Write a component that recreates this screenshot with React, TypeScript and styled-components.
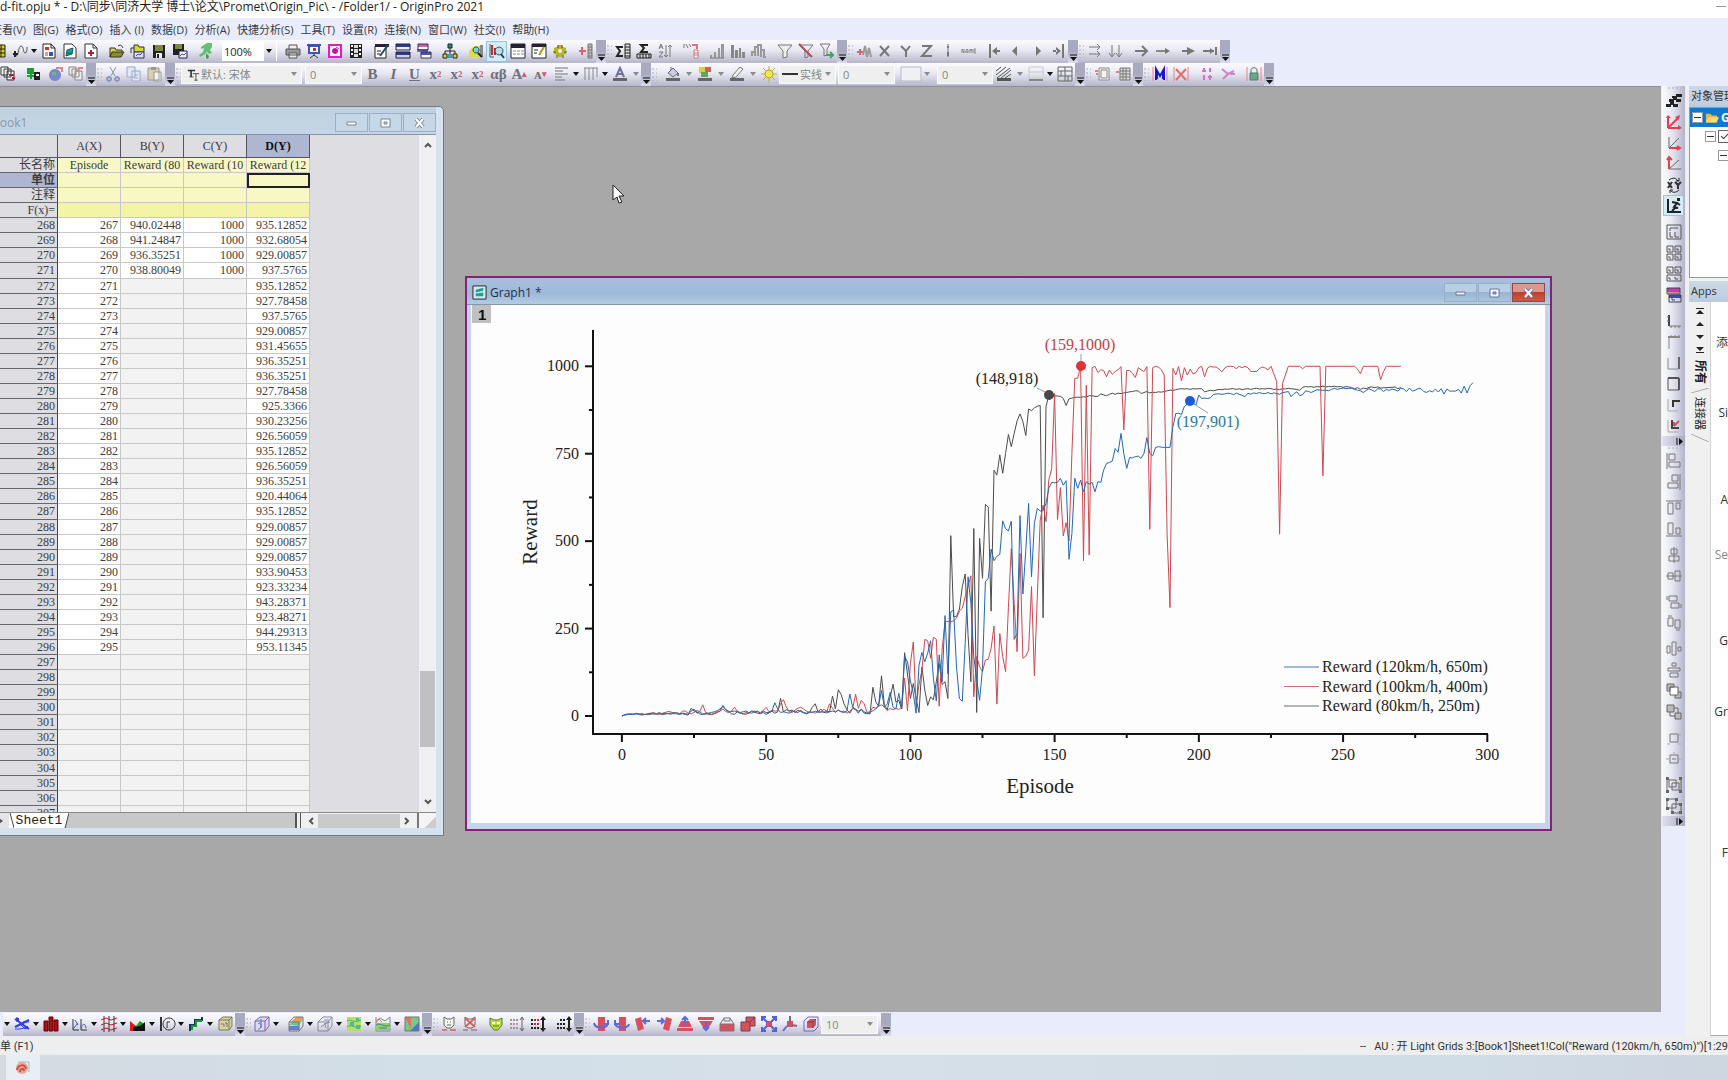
import React from 'react';
import styled, { createGlobalStyle, css } from 'styled-components';

const uiFont = '"Open Sans", "Noto Sans CJK SC", sans-serif';
const sheetFont = '"Liberation Serif", "Noto Sans CJK SC", serif';

const Global = createGlobalStyle`
  *, *::before, *::after { box-sizing: border-box; }
  body { margin: 0; font-family: ${uiFont}; font-size: 12px; color: #333; overflow: hidden; }
  button, select, input { font-family: inherit; }
`;

/* ---------- icon shapes: s = thin stroke, S = thick stroke, f = fill ---------- */

const shapes: Record<string, string> = {
  gridYellow: 'f#d8d020 M1 2h13v12H1z;s#222 M1 2h13v12H1zM1 6h13M1 10h13M5 2v12M10 2v12',
  curve: 's#555 M4 13c3 0 2-10 5-10s2 7 4 7 2-3 2-6;S#222 M1 11h5M3 8v6',
  report: 'f#fff M2 1h8l4 4v10H2z;s#222 M2 1h8l4 4v10H2zM10 1v4h4;f#c33 M4 4h4v3H4z;f#35a M8 9h4v4H8z;s#c33 M4 10h3M4 12h3',
  graphNew: 'f#fff M2 1h8l4 4v10H2z;s#333 M2 1h8l4 4v10H2z;f#1aa39a M5 7l6-2-1 6-6 2z;s#0c5c66 M5 7l6-2-1 6-6 2zM4 10h7',
  pageRed: 'f#fff M2 1h8l4 4v10H2z;s#333 M2 1h8l4 4v10H2zM10 1v4h4;S#b02038 M5 10h6M8 7v6',
  open: 'f#d8d43c M1 5h5l1 2h6v7H1z;f#8c8a20 M3 9h12l-3 5H1z;s#333 M1 14V5h5l1 2h6v2M3 9h12l-3 5H1z;s#333 M9 3c3-2 4 0 5 2',
  openAlt: 'f#d8d43c M4 2h4l1 2h5v5H4z;s#333 M4 2h4l1 2h5v5H4z;f#dde M4 9h10v6H4z;s#334 M4 9h10v6H4z;s#35a M6 13l2-2 2 1 2-2;s#333 M1 10V5h3',
  save: 'f#222 M2 2h12v13H2z;f#7a8a40 M4 2h8v6H4z;f#eee M5 10h6v5H5z;f#222 M6 11h2v4H6z',
  saveAll: 'f#222 M1 1h11v11H1z;f#7a8a40 M3 1h7v5H3z;f#eef M7 8h8v7H7z;s#224 M7 8h8v7H7z;s#35a M8 13l2-2 2 1 2-2',
  runner: 'f#63c070 M9 0h5v4l-2 3 2 3-3 1-2-2-3 3-4 2-1-2 4-3 1-4-3 1V4z;f#3d9a58 M8 10l3 3-1 3-2-1z',
  printer: 'f#999 M1 6h14v6H1z;f#eee M4 2h8v4H4zM4 10h8v5H4z;s#555 M4 6V2h8v4M1 6h14v6H1zM4 10h8v5H4z',
  present: 'f#3858b0 M1 1h14v2H1zM2 3h12v8H2z;f#fff M4 4h8v5H4z;s#333 M8 11v2M4 15l4-3 4 3;f#c33 M7 5h3v3H7z',
  pinkBox: 'f#e818c8 M1 1h14v14H1z;f#fff M3 3h10v10H3z;f#c010a8 M8 5a3 3 0 1 0 .1 0z;s#e818c8 M9 4l3 2',
  film: 'f#222 M2 1h12v14H2z;f#ddd M6 2h4v3H6zM6 6h4v4H6zM6 11h4v3H6z;f#fff M3 2h2v2H3zM3 6h2v2H3zM3 10h2v2H3zM11 2h2v2h-2zM11 6h2v2h-2zM11 10h2v2h-2z',
  edit: 'f#fff M1 3h11v12H1z;f#224 M1 1h14v3H1z;s#222 M1 3h11v12H1z;S#2a4a5a M14 2L6 13;s#222 M3 8h4M3 11h3',
  panes: 'f#2a3a90 M1 1h14v3H1zM1 9h14v3H1z;s#224 M1 1h14v6H1zM1 9h14v6H1z',
  cascade: 'f#fff M2 1h10v7H2zM5 8h10v7H5z;f#d060a8 M2 1h10v3H2z;f#7b68c8 M1 6h11v3H1z;f#4858b0 M5 9h10v3H5z;s#335 M5 9h10v6H5zM2 1h10v6H2z',
  tree: 'f#2a8a8a M6 1h4v4H6z;f#e0d040 M1 11h4v4H1zM11 11h4v4h-4z;f#3aa0b0 M6 11h4v4H6z;s#222 M8 5v6M3 11V8h10v3M6 1h4v4H6zM1 11h4v4H1zM11 11h4v4h-4z',
  findYellow: 'f#e0dc40 M1 8l5-5h9v11H1z;f#888 M12 2h3v12h-3z;f#7ad0d8 M8 4a3 3 0 1 0 .1 0z;s#246 M8 4a3 3 0 1 0 .1 0z;S#222 M10 10l4 4',
  findPlot: 'S#b33 M3 2v10;S#933 M6 5v7;s#555 M1 1v13h4;f#b8dcec M10 4a4 4 0 1 0 .1 0z;s#357 M10 4a4 4 0 1 0 .1 0z;S#244 M12 11l3 4',
  sheet: 'f#fff M1 1h14v14H1z;f#223 M1 1h14v4H1z;s#223 M1 1h14v14H1z;s#888 M3 8h3M7 8h3M11 8h3M3 11h3M7 11h3M11 11h3',
  sheetEdit: 'f#fff M1 1h14v14H1z;f#223 M1 1h14v3H1z;s#223 M1 1h14v14H1z;S#a8a020 M13 4l-5 8;s#223 M3 7h4M3 10h3',
  gear: 'f#b8b428 M6 2h4l1 2 3 1v6l-3 1-1 2H6l-1-2-3-1V5l3-1z;s#554 M1 9h3M12 9h3M6 2v3M10 2v3M5 12v3M11 12v3;f#eee M8 6a2 2 0 1 0 .1 0z',
  addCol: 'S#e06070 M1 8h7M4 4v8;f#bbb M10 1h4v14h-4z;s#777 M10 1h4v14h-4zM10 4h4M10 7h4M10 10h4M10 13h4',
  sumCol: 'S#222 M8 4H2l3 4-3 5h6;f#ddd M10 1h5v14h-5z;s#222 M10 1h5v14h-5zM10 4h5M10 7h5M10 10h5M10 13h5',
  sumRow: 'S#222 M12 2H5l3 3-3 4h7;s#222 M1 11h14v4H1zM4 11v4M7 11v4M10 11v4M13 11v4',
  sortAZ: 's#777 M2 6l2-5 2 5M2 4h4M2 9h4l-4 5h4M9 2v12M7 12l2 2 2-2M13 14V2M11 4l2-2 2 2',
  yRed: 's#777 M1 1v4M3 1l2 4M6 1l2 3;f#fff M11 7h4v8h-4z;s#c77 M11 7h4v8h-4zM11 10h4M11 12h4;S#e07080 M9 2h5v4',
  bars1: 'f#999 M1 12h2v3H1zM5 9h2v6H5zM9 5h2v10H9zM12 1h3v14h-3z;s#777 M1 15h14',
  bars2: 'f#888 M1 2h3v13H1zM5 7h3v8H5zM9 5h2v10H9zM12 9h3v6h-3z',
  bars3: 'S#999 M1 13v-4h3v4M4 9V4h3v9M7 8V2h3v12M10 7h3v7h2',
  funnel: 'f#eee M1 2h14l-5 6v6l-4 1V8z;s#777 M1 2h14l-5 6v6l-4 1V8z',
  funnelX: 's#777 M2 2h13l-5 6v6l-3 1V8z;S#b84858 M1 1l13 13',
  funnelGo: 's#777 M1 1h10L8 6v6l-3 1V6z;S#48a068 M7 12h7M11 9l3 3-3 3',
  plusWave: 'S#e06070 M1 9h6M4 6v6;S#999 M7 12l2-9 2 11 2-9 2 9',
  xTxt: 'S#777 M3 3l9 10M12 3L3 13',
  yTxt: 'S#777 M3 3l5 5 4-5M8 8v6',
  zTxt: 'S#777 M3 3h9L3 13h10',
  dotV: 's#777 M8 1v13;S#777 M8 3v2M8 9v3M7 12h2',
  nameTag: 's#888 M1 10V6l2 4V6M5 10V7l1-1 1 1v3M5 9h2M9 10V6l1 2 1-2v4M15 6h-2v4h2M13 8h2',
  toStart: 'S#777 M3 1v14;f#777 M5 8l5-4v8zM9 7h4v2H9z',
  left: 'f#777 M4 8l5-5v10z',
  right: 'f#777 M12 8L7 3v10z',
  toEnd: 'S#777 M13 1v14;f#777 M11 8L6 4v8zM3 7h4v2H3z',
  rights: 's#777 M2 4h11M10 1l3 3-3 3M2 11h11M10 8l3 3-3 3',
  downs: 's#777 M4 2v11M1 10l3 4 3-4M11 2v11M8 10l3 4 3-4',
  arrowBig: 'S#777 M1 8h12M8 3l5 5-5 5',
  arrowSm: 'S#888 M1 8h11;f#777 M10 5l5 3-5 3z',
  arrowFill: 'S#777 M1 8h8;f#777 M6 4l8 4-8 4z',
  arrowEnd: 'S#777 M1 8h11M14 4v8;f#777 M8 5l4 3-4 3z',
  stack: 'f#fff M1 1h7v8H1zM4 3h7v8H4zM7 5h7v8H7z;s#333 M1 1h7v8H1zM4 3h7v8H4zM7 5h7v9H7z;S#b02038 M9 9h5M12 12h3',
  greenIn: 'f#18a030 M1 2h7v6H1z;f#222 M8 6h6v8H8z;S#18a030 M1 10h7M5 7v6;f#fff M10 8h3v2h-3z',
  globe: 'f#7888c8 M8 3a6 6 0 1 0 .1 0z;f#70b888 M5 6h4v3H5z;S#e08888 M9 2h6v4',
  copies: 'f#eee M1 1h7v8H1zM4 3h7v8H4zM7 5h7v9H7z;s#888 M1 1h7v8H1zM4 3h7v8H4zM7 5h7v9H7z;S#e08888 M10 2h5M9 5h3',
  cut: 's#8898b8 M5 1l5 9M11 1L6 10;S#8898b8 M4 11a2 2 0 1 0 .1 0zM12 11a2 2 0 1 0 .1 0z',
  copy: 'f#e4e8f4 M1 1h8v10H1zM6 5h8v10H6z;s#98a8c8 M1 1h8v10H1zM6 5h8v10H6zM8 9h4M8 12h4',
  paste: 'f#d8d0a8 M1 2h11v12H1z;f#999 M4 1h5v3H4z;f#f4f4f4 M7 6h7v9H7z;s#999 M1 2h11v12H1zM7 6h7v9H7z',
  alignL: 's#777 M1 2h13M1 5h8M1 8h13M1 11h7M1 14h10',
  vlines: 's#888 M2 2v12M6 2v12M10 2v12M14 2v9M1 2h14',
  fontColor: 'S#7070a0 M4 11l4-9 4 9M6 8h5;f#666 M1 12h14v3H1z',
  bucket: 'f#ccd M3 7l5-5 5 5-5 4z;s#667 M3 7l5-5 5 5-5 4zM6 4V1;S#778 M13 7v3;f#666 M1 12h14v3H1z',
  palette: 'f#d8d040 M2 1h6v6H2z;f#d06060 M8 1h6v5H8z;f#60a860 M4 6h7v5H4z;f#666 M1 12h14v3H1z',
  pen: 'f#eee M4 9l7-8 3 2-7 8-4 1z;s#777 M4 9l7-8 3 2-7 8-4 1z;f#666 M1 12h14v3H1z',
  sun: 's#c0b020 M8 0v16M0 8h16M2 2l12 12M14 2L2 14;f#f0e850 M8 3.500a4.500 4.500 0 1 0 .1 0z;s#a8a040 M8 4a4 4 0 1 0 .1 0z',
  swatch: 'f#eef0f6 M-2 1h20v14H-2z;s#bbb M-2 1h20v14H-2z',
  hatch: 's#555 M0 5l5-4M0 9l10-8M1 12L14 2M5 12l10-8M9 12l6-4;f#555 M1 12h14v3H1z',
  border: 's#ccc M1 1h14v11H1zM1 6h14;f#888 M1 13h14v2H1z',
  cells: 's#666 M1 1h14v14H1zM1 5h14M1 10h14M8 1v14M4 5v5M11 10v5',
  frameIn: 'f#f4f4f4 M5 2h10v12H5z;s#888 M5 2h10v12H5zM7 4h6v8H7z;S#e08080 M1 5h3M2 8h2',
  gridIn: 'f#ddd M5 2h10v12H5z;s#777 M5 2h10v12H5zM5 5h10M5 8h10M5 11h10M8 2v12M11 2v12;S#e08080 M1 6h4',
  mMark: 's#f08090 M1 1v14M15 1v14;S#1818c8 M4 14V3l4 7 4-7v11M5 5v8M11 5v8',
  xMark: 's#f08080 M1 1v14M15 1v14;S#e07070 M3 3l10 11M13 3L3 14',
  pinkDots: 'S#d870d0 M5 2v4M5 9v5M11 2v4M11 9v5M3 5h4M9 11h4',
  pinkCut: 'S#c888c8 M2 3l6 5-5 5M8 8l6-3M10 8h5',
  lock: 's#f08080 M1 1v14M15 1v14;f#68a888 M4 7h8v7H4z;s#587868 M5 7V4c0-3 6-3 6 0v3M4 7h8v7H4z',
  scatter: 'S#3040e0 M1 3l14 10M1 11l6-3 8-4;s#3040e0 M1 13h5l8-2M3 1v5M9 6h6M6 8l5 5;f#3040e0 M2 2h3v3H2zM11 10h3v3h-3z',
  redBars: 'f#a81018 M1 5h4v10H1zM6 1h4v14H6zM11 4h4v11h-4z;s#600 M1 5h4v10H1zM6 1h4v14H6zM11 4h4v11h-4z',
  multi: 's#333 M1 3v11h6M9 3v11h6;s#4050c0 M1 13l5-6M9 12c2-5 4-5 5 0M3 4l3 5',
  redGrid: 's#333 M3 0v16M8 0v16M13 0v16;s#c01828 M0 4l5-2 5 2 6-2M0 9l5-2 5 2 6-2M0 14l5-2 5 2 6-2',
  area: 'f#e01818 M0 5l7 6v4H0z;f#18a018 M6 10l4-5 5 4v3H8z;f#111 M3 11l7-1 5-4v9H3z',
  polar: 'S#333 M2 1v14;s#333 M10 2a6 6 0 1 0 .1 0zM8 12V6h3',
  steps: 'S#123a58 M2 15V9h5V4h7V1;S#189838 M4 14V10h4V5h6',
  template: 'f#d8d4a0 M2 4l4-3h9v9l-3 4H2z;s#776 M2 4h10v10H2zM2 4l4-3h9v9l-3 4M12 4l3-3M4 8h3v3M8 7h2v4',
  cube: 'f#dcd8f0 M1 5l5-4h9v9l-4 5H1z;s#776898 M1 5h10v10H1zM1 5l5-4h9v9l-4 5M11 5l4-4;s#5870c0 M4 8c4-4 4 6 0 5M7 3v9',
  surface: 'f#70c888 M1 9l5-6h9l-4 7z;f#e8a050 M4 5l4-4h7l-3 5z;f#6080d8 M1 10h10v4H1z;s#777 M1 6h10v9H1zM1 6l5-5h9v9l-4 5',
  wire: 's#8888a0 M1 6h10v9H1zM1 6l5-5h9v9l-4 5M11 6l4-5M4 11l4-3 1 4M7 4h5M7 8l6-2',
  contour: 'f#b8e068 M1 1h14v14H1z;s#48a878 M1 5c4-3 5 3 14-1M1 11c5-4 8 3 14-1;f#50b8a0 M4 6h4v4H4zM10 9h4v4h-4zM10 2h3v3h-3z',
  contourEdge: 's#888 M1 1v14h14V1M1 5l4-3 5 3 5-4;f#90d068 M1 7h14v7H1z;s#3888a0 M1 9c4-3 8 3 14 0M4 12h8;s#d08060 M1 7l3-4 3 3',
  rgbMap: 'f#78c888 M1 1h14v14H1z;f#e07060 M1 1h6v12z;f#4878d0 M15 15V6L6 15z;s#776 M1 1h14v14H1z',
  maskW: 'f#f4f4f4 M3 1l3 2h4l3-2v8l-3 3H6L3 9z;s#666 M3 1l3 2h4l3-2v8l-3 3H6L3 9zM6 6h1M9 6h1M6 9h4;S#d87878 M1 14h5M9 14h6',
  maskX: 's#666 M3 1l3 2h4l3-2v8l-3 3H6L3 9zM1 14h5M9 14h6;S#d86060 M3 2l10 9M13 2L3 11',
  maskG: 'f#c8d838 M2 2l4 2h4l4-2v7l-4 5H6L2 9z;s#48803c M2 2l4 2h4l4-2v7l-4 5H6L2 9zM5 10h6;f#fff M4 6h3v2H4zM9 6h3v2H9z',
  dotsGray: 'S#999 M1 4h2M4 4h2M7 4h2M1 12h2M4 12h2M7 12h2M1 8h2;S#d09090 M4 8h2M7 8h2;s#666 M13 1v14M11 4l2-3 2 3M11 12l2 3 2-3',
  dotsRed: 'S#222 M1 4h2M1 8h2M1 12h2M4 12h2M7 12h2;S#d02828 M4 4h2M7 4h2M4 8h2M7 8h2;S#222 M13 3v10;f#222 M10 4l3-4 3 4zM10 12l3 4 3-4z',
  dotsBlack: 'S#222 M1 8h2M4 8h2M7 8h2M1 12h2M4 12h2M7 12h2M4 4h2M7 4h2M13 3v10;f#222 M10 4l3-4 3 4zM10 12l3 4 3-4z',
  rotL: 'f#d85060 M5 1h7v14H5z;S#6068d8 M1 7c1 6 13 6 14 0M15 4v4h-4',
  rotR: 'f#d85060 M5 1h7v14H5z;S#6068d8 M15 8c-1 5-13 5-14-1M1 4v4h5',
  tiltL: 'f#d85060 M0 3l6-2 3 12-6 2z;S#6068e0 M8 5h7M11 2L8 5l3 3',
  tiltR: 'f#d85060 M16 3l-6-2-3 12 6 2z;S#6068e0 M1 5h7M5 2l3 3-3 3',
  trapUp: 'f#d85060 M4 5h8l3 6H1zM0 12h16v3H0z;S#6068e0 M8 9V1M5 4l3-3 3 3',
  trapDown: 'f#d85060 M0 1h16v3H0zM1 5h14l-4 6H5z;S#6068e0 M8 6v8M5 11l3 3 3-3',
  persp: 'f#d85060 M1 8h14v7H1z;s#777 M1 8l4-6h6l4 6M5 2v3h6V2M1 8h14v7H1z',
  cubeRed: 'f#d85060 M1 6h9v9H1zM6 1h9v9h-5V6H6z;s#704050 M1 6h9v9H1zM6 6V1h9v9h-5M10 6l5-5',
  expand: 'f#c85068 M5 5h6v6H5z;S#5060e0 M1 5V1h4M11 1h4v4M15 11v4h-4M5 15H1v-4M2 2l4 4M14 2l-4 4M2 14l4-4M14 14l-4-4',
  shrink: 'f#d85060 M5 5h6v6H5z;S#886088 M8 0v6M10 9l5 1;S#6068d0 M5 10l-4 5',
  cubeBlue: 's#6068e0 M1 5l4-4h10v10l-4 4H1z;f#d85060 M4 6l3-3h6v6l-3 3H4z;s#704050 M4 6h6v6M10 6l3-3',
  layers: 'f#222 M0 11h5v3H0zM4 9h4v3H4zM7 11h5v3H7zM3 6h5v3H3zM7 4h4v3H7zM10 6h5v3h-5zM6 3h4v2H6zM10 1h6v3h-6z',
  axesRed: 'S#e04050 M2 14h12M2 14V3M2 14L12 4;f#e04050 M0 4l2-3 3 3zM12 11l4 3-4 2zM9 3l5-2-1 5z',
  axesX: 's#666 M3 2v11L13 3;S#e04050 M3 13h11M11 11l3 2-3 2',
  axesY: 's#666 M3 13h12M3 13l10-9;S#e04050 M3 13V2M1 4l2-3 3 3',
  swapXY: 'S#333 M2 5l4 6M6 5l-4 6M9 5l3 3 3-3M12 8v4;s#222 M3 3c4-3 7-2 9 1M13 1v3h-3M13 13c-3 3-7 3-9 0M4 16v-3h3',
  runPlot: 'S#222 M2 1v13h13M6 4l5 1-3 4 4 1M10 9l-4 4M11 5l3 2;f#222 M11 0h3v3h-3z',
  panel1: 's#555 M1 1h14v14H1zM4 4h8M4 4v3M4 8v5h3M9 8v5h4',
  panel4: 's#555 M1 1h6v6H1zM9 1h6v6H9zM1 9h6v6H1zM9 9h6v6H9zM3 3v2h2M11 3v2h2M3 11v2h2M11 11v2h2',
  panel3: 's#555 M1 1h6v6H1zM9 1h6v6H9zM1 9h14v6H1zM3 3v2h2M11 3v2h2M3 11v2h2M9 11v2h3',
  panelColor: 'f#c838b8 M1 1h13v4H1z;f#3848d0 M3 8h12v3H3z;s#444 M1 1h13v6H1zM3 8h12v7H3zM6 11v2h3;s#c04050 M2 6h11',
  axLB: 'S#444 M3 2v11;s#777 M3 13h12M5 13v2M9 13v2M13 13v2M1 4h2M1 8h2',
  axT: 's#888 M3 3v12;S#888 M2 3h12;s#888 M5 1v2M9 1v2M13 1v2',
  axR: 's#888 M2 3v11h11;S#666 M13 2v12',
  axBox: 's#555 M2 2h11v12H2z;S#555 M2 2h11M13 2v12',
  axIn: 's#aaa M2 2v12h10;S#333 M7 9V4h7M7 4v6',
  axInRed: 's#aaa M2 2v12h10;S#444 M6 2v8h7;S#d05060 M8 8l5-5M8 4v4',
  al1: 's#777 M3 1h6v6H3zM3 9h11v5H3zM1 0v16',
  al2: 's#777 M6 1h6v6H6zM2 9h10v5H2zM14 0v16',
  al3: 's#777 M2 3h5v11H2zM10 3h4v6h-4zM0 1h16',
  al4: 's#777 M2 2h5v11H2zM10 7h4v6h-4zM0 15h16',
  al5: 's#777 M5 2h6v5H5zM3 9h10v5H3zM8 0v16',
  al6: 's#777 M2 5h5v6H2zM9 3h5v10H9zM0 8h16',
  al7: 's#777 M3 2h8v5H3zM5 9h8v5H5zM1 2v4M15 10v4',
  al8: 's#777 M2 3h5v8H2zM9 5h5v8H9zM2 1h4M10 15h4',
  al9: 's#777 M1 5h3v7H1zM6 1h4v13H6zM12 6h3v4h-3z',
  al10: 's#777 M6 1h4v3H6zM2 6h12v3H2zM4 11h8v4H4z',
  front: 'f#bbb M1 1h7v6H1zM9 9h6v6H9z;f#fff M4 4h8v8H4z;s#666 M1 1h7v3H4v4H1zM4 4h8v8H4zM12 9h3v6H9v-3',
  back: 'f#bbb M1 1h7v7H1zM9 9h6v6H9z;s#666 M1 1h7v7H1zM9 9h6v6H9zM8 4h4v5M4 8v4h5',
  sq1: 's#777 M4 4h8v8H4z;s#aaa M1 14h3M12 14h3M14 3v3',
  sq2: 's#777 M4 4h8v8H4zM6 8h4;s#aaa M0 8h3M13 8h3M8 1v2',
  grp1: 's#666 M1 3v10M15 3v10M3 3h7v7H3zM6 6h7v7H6z;f#666 M0 0h3v3H0zM13 0h3v3h-3zM0 13h3v3H0zM13 13h3v3h-3z',
  grp2: 's#666 M1 1h9v9H1zM6 6h9v9H6z;f#666 M0 0h3v3H0zM9 0h3v3H9zM0 9h3v3H0zM13 5h3v3h-3zM5 13h3v3H5zM13 13h3v3h-3z',
  graphIcon: 'f#d8e8ea M1 1h14v14H1z;s#222 M1 1h14v14H1z;f#1aa39a M4 5l8-2v3l-8 2zM4 9l8-1v4H4z',
  folder: 'f#e8b830 M1 3h5l2 2h6v8H1z;f#f8dc78 M4 7h12l-3 6H1z',
  tt: 'S#333 M1 3h9M5 3v8;s#333 M7 7h8M11 7v8M9 15h4M3 11h5',
};

const Glyph = ({ name, size = 16 }: { name: string; size?: number }) => (
  <svg width={size} height={size} viewBox="0 0 16 16" overflow="visible" aria-hidden="true">
    {shapes[name].split(';').map((part, i) => {
      const cut = part.indexOf(' ');
      const kind = part[0];
      const color = part.slice(1, cut);
      const d = part.slice(cut + 1);
      return kind === 'f'
        ? <path key={i} d={d} fill={color} />
        : <path key={i} d={d} fill="none" stroke={color} strokeWidth={kind === 'S' ? 2 : 1} />;
    })}
  </svg>
);

const Caret = ({ dark = true }: { dark?: boolean }) => (
  <svg width="6" height="4" viewBox="0 0 6 4" aria-hidden="true">
    <path d="M0 0h6L3 4z" fill={dark ? '#111' : '#8a8a92'} />
  </svg>
);

/* ---------- frame ---------- */

const Page = styled.div`
  display: flex;
  flex-direction: column;
  height: 100vh;
  overflow: hidden;
  background: #e9edfb;
`;

const TitleBar = styled.header`
  display: flex;
  justify-content: space-between;
  align-items: center;
  height: 18px;
  padding-bottom: 4px;
  background: #fff;
  color: #1c1c1c;
  font-size: 12px;
  line-height: 14px;
  white-space: nowrap;
`;

const MenuBar = styled.nav`
  display: flex;
  align-items: center;
  gap: 7px;
  height: 22px;
  margin-left: -9px;
  padding-top: 2px;
  font-size: 11px;
`;

const MenuItem = styled.button`
  flex: none;
  padding: 0;
  border: 0;
  background: none;
  color: #3a3a44;
  font-size: 11px;
  line-height: 18px;
  white-space: nowrap;
`;

const ToolRow = styled.div<{ $start: number }>`
  display: flex;
  flex: none;
  height: 23px;
  padding-left: ${p => Math.max(p.$start, 0)}px;
  margin-left: ${p => Math.min(p.$start, 0)}px;
`;

const ToolGroup = styled.div<{ $vertical?: boolean }>`
  display: flex;
  flex: none;
  align-items: center;
  ${p => p.$vertical ? css`
    flex-direction: column;
    width: 23px;
    background: linear-gradient(90deg, #fbfbfe, #e6e6f0 45%, #b4b4ca);
    border-radius: 0 0 3px 3px;
  ` : css`
    height: 23px;
    background: linear-gradient(#fbfbfe, #e8e8f2 45%, #b6b6ca);
    border-radius: 0 3px 3px 0;
    padding-bottom: 1px;
  `}
`;

const ToolButton = styled.button<{ $on?: boolean; $color?: string; $italic?: boolean }>`
  display: flex;
  flex: none;
  align-items: center;
  justify-content: center;
  width: 21px;
  height: 21px;
  padding: 0;
  border: 1px solid ${p => (p.$on ? '#8cc4ea' : 'transparent')};
  background: ${p => (p.$on ? '#d6ebf8' : 'none')};
  color: ${p => p.$color || '#70707c'};
  font: ${p => (p.$italic ? 'italic' : 'normal')} bold 15px/18px "Liberation Serif", serif;
  white-space: nowrap;
  sup, sub { font-size: 9px; line-height: 8px; color: #c86070; }
  u { text-decoration-thickness: 1px; }
`;

const DropButton = styled.button<{ $wide?: boolean }>`
  display: flex;
  flex: none;
  align-items: center;
  justify-content: center;
  width: ${p => (p.$wide ? 11 : 8)}px;
  height: 21px;
  padding: 0;
  border: 0;
  background: none;
`;

const Gap = styled.span<{ $size?: number }>`
  flex: none;
  width: ${p => p.$size || 5}px;
  height: 5px;
`;

const Grip = styled.span<{ $vertical?: boolean }>`
  flex: none;
  width: ${p => (p.$vertical ? 14 : 6)}px;
  height: ${p => (p.$vertical ? 4 : 14)}px;
  background: radial-gradient(circle, #a8a8b8 1px, transparent 1px) 0 0 / 4px 4px;
  opacity: 0.5;
`;

const MoreButton = styled.button<{ $vertical?: boolean }>`
  display: flex;
  flex: none;
  align-items: flex-end;
  justify-content: center;
  align-self: flex-start;
  padding: 0 0 2px;
  border: 0;
  width: 10px;
  height: 23px;
  background: linear-gradient(#a9a9c0 0 50%, #dcdcf0);
  ${p => p.$vertical && css`
    width: 23px;
    height: 10px;
    align-items: center;
    justify-content: flex-end;
    padding: 0 2px;
    background: linear-gradient(90deg, #e0e0f0, #a9a9c0);
  `}
`;

const More = ({ vertical }: { vertical?: boolean }) => (
  <MoreButton $vertical={vertical} aria-label="More buttons">
    {vertical
      ? <svg width="7" height="7" viewBox="0 0 7 7"><path d="M1 0v7" stroke="#111" /><path d="M3 0l4 3.500L3 7z" fill="#111" /></svg>
      : <svg width="7" height="7" viewBox="0 0 7 7"><path d="M0 1h7" stroke="#111" /><path d="M0 3h7L3.500 7z" fill="#111" /></svg>}
  </MoreButton>
);

const SelectBox = styled.span<{ $width: number; $white?: boolean }>`
  display: grid;
  flex: none;
  align-items: center;
  width: ${p => p.$width}px;
  height: 19px;
  background: ${p => (p.$white ? 'linear-gradient(90deg, #fff 42px, transparent 42px)' : '#efefef')};
  border: 1px solid ${p => (p.$white ? 'transparent' : '#fbfbfb')};
  > * { grid-area: 1 / 1; }
  > svg:last-child { justify-self: end; margin-right: 4px; pointer-events: none; }
`;

const Select = styled.select<{ $white?: boolean; $inset?: number }>`
  appearance: none;
  width: 100%;
  height: 17px;
  padding: 0 0 0 ${p => p.$inset || 4}px;
  border: 0;
  background: none;
  color: ${p => (p.$white ? '#222' : '#868686')};
  font-size: 11px;
  line-height: 17px;
`;

const Combo = ({ label, value, width, white, inset, icon }:
  { label: string; value: string; width: number; white?: boolean; inset?: number; icon?: React.ReactNode }) => (
  <SelectBox $width={width} $white={white}>
    {icon}
    <Select aria-label={label} $white={white} $inset={inset}><option>{value}</option></Select>
    <Caret dark={!!white} />
  </SelectBox>
);

/* A toolbar is a list of tokens: an icon name, or
   "v" / "V" drop arrow, "|" gap, ":" grip, ">" overflow. */
const Tools = ({ items, vertical, active }: { items: string; vertical?: boolean; active?: string }) => (
  <>
    {items.split(' ').map((t, i) => {
      if (t === '|') return <Gap key={i} />;
      if (t === ':') return <Grip key={i} $vertical={vertical} />;
      if (t === '>') return <More key={i} vertical={vertical} />;
      if (t === 'v' || t === 'V') return <DropButton key={i} $wide={t === 'V'} aria-label="Options"><Caret dark={t === 'v'} /></DropButton>;
      return <ToolButton key={i} $on={t === active} aria-label={t}><Glyph name={t} /></ToolButton>;
    })}
  </>
);

const Body = styled.div`
  display: flex;
  flex: 1;
  min-height: 0;
`;

const MainColumn = styled.div`
  display: flex;
  flex: 1;
  flex-direction: column;
  min-width: 0;
`;

const Workspace = styled.main`
  position: relative;
  flex: 1;
  min-height: 0;
  margin-bottom: 1px;
  overflow: hidden;
  background: #a8a8a8;
  border-top: 1px solid #8e8e9a;
`;

/* ---------- workbook window ---------- */

const BookWindow = styled.section`
  position: absolute;
  left: -10px;
  top: 19px;
  width: 454px;
  height: 730px;
  display: flex;
  flex-direction: column;
  padding: 0 7px 7px 0;
  border: 1px solid #6c7c8c;
  border-radius: 0 5px 0 0;
  background: #d6e2ee;
`;

const WindowTitle = styled.div<{ $active?: boolean }>`
  display: flex;
  flex: none;
  align-items: flex-end;
  justify-content: space-between;
  height: ${p => (p.$active ? 27 : 28)}px;
  padding-bottom: 2px;
  padding-left: ${p => (p.$active ? 5 : 1)}px;
  border-bottom: 1px solid #8496a8;
  background: ${p => (p.$active
    ? 'linear-gradient(#a8c0dc, #9db9d8 60%, #b4cce2)'
    : 'linear-gradient(#c0d0de, #c4d6e6)')};
  color: ${p => (p.$active ? '#22304a' : '#8c98a4')};
  font-size: 12px;
  line-height: 19px;
`;

const TitleText = styled.span`
  display: flex;
  align-items: center;
  gap: 3px;
`;

const CaptionButtons = styled.div`
  display: flex;
  gap: 1px;
`;

const CaptionButton = styled.button<{ $tone?: 'red' | 'blue' }>`
  display: flex;
  align-items: center;
  justify-content: center;
  width: 33px;
  height: 19px;
  padding: 0;
  border: 1px solid ${p => (p.$tone === 'red' ? '#8c4a50' : '#98b0c8')};
  background: ${p => p.$tone === 'red'
    ? 'linear-gradient(#dc9890 0 45%, #c04028 50%, #cc5a44)'
    : p.$tone === 'blue' ? 'linear-gradient(#b8cee4 0 45%, #98b4d2 50%, #a8c4de)' : '#c6d8e8'};
`;

const Captions = ({ active }: { active?: boolean }) => {
  const ink = active ? '#f4f4f8' : '#fff';
  const edge = active ? '#66789a' : '#7a8694';
  return (
    <CaptionButtons>
      <CaptionButton $tone={active ? 'blue' : undefined} aria-label="Minimize">
        <svg width="11" height="8" viewBox="0 0 11 8"><path d="M1 3h9v3H1z" fill={ink} stroke={edge} /></svg>
      </CaptionButton>
      <CaptionButton $tone={active ? 'blue' : undefined} aria-label="Maximize">
        <svg width="11" height="10" viewBox="0 0 11 10"><path d="M1 1h9v8H1zM4 4h3v2H4z" fill={ink} fillRule="evenodd" stroke={edge} /></svg>
      </CaptionButton>
      <CaptionButton $tone={active ? 'red' : undefined} aria-label="Close">
        <svg width="11" height="10" viewBox="0 0 11 10">
          <path d="M2 1l7 8M9 1L2 9" stroke={edge} strokeWidth="4" /><path d="M2 1l7 8M9 1L2 9" stroke={ink} strokeWidth="2" />
        </svg>
      </CaptionButton>
    </CaptionButtons>
  );
};

const BookBody = styled.div`
  display: flex;
  flex: 1;
  min-height: 0;
  overflow: hidden;
  background: #dddde2;
`;

const SheetArea = styled.div`
  flex: 1;
  min-width: 0;
  overflow: hidden;
`;

const SheetTable = styled.table`
  width: 319px;
  height: 686px;
  table-layout: fixed;
  border-collapse: separate;
  border-spacing: 0;
  font-family: ${sheetFont};
  font-size: 12px;
  line-height: 14px;
  color: #3c3c3c;
  th, td { padding: 0 2px; overflow: hidden; white-space: nowrap; }
`;

const ColHead = styled.th<{ $on?: boolean }>`
  height: 23px;
  border-right: 1px solid #54545c;
  border-bottom: 1px solid #54545c;
  background: ${p => (p.$on ? '#aeb6d2' : '#dddde2')};
  font-weight: ${p => (p.$on ? 'bold' : 'normal')};
  color: ${p => (p.$on ? '#111' : '#3c3c3c')};
`;

const RowHead = styled.th<{ $on?: boolean }>`
  border-right: 1px solid #44444c;
  border-bottom: 1px solid #66666e;
  background: ${p => (p.$on ? '#aeb6d2' : '#dddde2')};
  font-weight: ${p => (p.$on ? 'bold' : 'normal')};
  text-align: right;
`;

const cellFill = { label: '#f7f8c4', formula: '#f4f4a6', data: '#fff', empty: '#f2f2f2' };

const Cell = styled.td<{ $kind: keyof typeof cellFill; $cursor?: boolean }>`
  height: 15px;
  border-right: 1px solid #c8c8c8;
  border-bottom: 1px solid #c8c8c8;
  background: ${p => cellFill[p.$kind]};
  text-align: ${p => (p.$kind === 'label' ? 'center' : 'right')};
  ${p => p.$cursor && 'outline: 2px solid #222; outline-offset: -2px;'}
`;

const VScroll = styled.div`
  display: flex;
  flex: none;
  flex-direction: column;
  align-items: center;
  justify-content: space-between;
  width: 17px;
  padding: 6px 0;
  background: #f0f0f0;
`;

const Track = styled.div`
  display: flex;
  flex: 1;
  flex-direction: column;
  justify-content: flex-end;
  align-self: stretch;
  padding: 0 1px 51px;
`;

const Thumb = styled.div`
  height: 76px;
  background: #c0c0c0;
`;

const ScrollButton = styled.button`
  display: flex;
  padding: 0;
  border: 0;
  background: none;
`;

const Chevron = ({ d }: { d: string }) => (
  <svg width="8" height="8" viewBox="0 0 8 8"><path d={d} fill="none" stroke="#555" strokeWidth="2" /></svg>
);

const SheetFooter = styled.div`
  display: flex;
  flex: none;
  height: 16px;
  background: #f0f0f0;
  border-top: 1px solid #888;
`;

const SheetNav = styled.button`
  flex: none;
  width: 18px;
  padding: 0;
  border: 0;
  background: #e4e4e8;
  display: flex;
  align-items: center;
  justify-content: flex-end;
`;

const SheetTab = styled.button`
  display: flex;
  flex: none;
  align-items: center;
  justify-content: space-between;
  width: 60px;
  padding: 0;
  border: 0;
  background: #fff;
  color: #222;
  font: 13px/15px "Liberation Mono", monospace;
`;

const TabSpace = styled.div`
  flex: 1;
  border-right: 2px solid #555;
  margin-right: 3px;
  background: #c8c8c8;
`;

const HScroll = styled.div`
  display: flex;
  flex: none;
  align-items: center;
  justify-content: space-between;
  width: 119px;
  padding: 0 6px;
  border-left: 1px solid #555;
  border-right: 2px solid #777;
`;

const HThumb = styled.div`
  width: 82px;
  height: 14px;
  background: #cacaca;
`;

const Corner = styled.div`
  width: 17px;
  background: linear-gradient(135deg, #f4f4f4 65%, #ccc 65%);
`;

const lastD = [
  935.12852, 932.68054, 929.00857, 937.5765, 935.12852, 927.78458, 937.5765, 929.00857, 931.45655, 936.35251,
  936.35251, 927.78458, 925.3366, 930.23256, 926.56059, 935.12852, 926.56059, 936.35251, 920.44064, 935.12852,
  929.00857, 929.00857, 929.00857, 933.90453, 923.33234, 943.28371, 923.48271, 944.29313, 953.11345,
];
const lastB = [940.02448, 941.24847, 936.35251, 938.80049];

const Workbook = () => (
  <BookWindow aria-label="Book1">
    <WindowTitle><TitleText>Book1</TitleText><Captions /></WindowTitle>
    <BookBody>
      <SheetArea>
        <SheetTable>
          <colgroup><col width="67" /><col width="63" /><col width="63" /><col width="63" /><col width="63" /></colgroup>
          <thead>
            <tr>
              <ColHead />
              <ColHead>A(X)</ColHead><ColHead>B(Y)</ColHead><ColHead>C(Y)</ColHead><ColHead $on>D(Y)</ColHead>
            </tr>
          </thead>
          <tbody>
            <tr>
              <RowHead>长名称</RowHead>
              <Cell $kind="label">Episode</Cell><Cell $kind="label">Reward (80</Cell>
              <Cell $kind="label">Reward (10</Cell><Cell $kind="label">Reward (12</Cell>
            </tr>
            <tr>
              <RowHead $on>单位</RowHead>
              <Cell $kind="label" /><Cell $kind="label" /><Cell $kind="label" /><Cell $kind="label" $cursor />
            </tr>
            <tr><RowHead>注释</RowHead>{[0, 1, 2, 3].map(i => <Cell key={i} $kind="label" />)}</tr>
            <tr><RowHead>F(x)=</RowHead>{[0, 1, 2, 3].map(i => <Cell key={i} $kind="formula" />)}</tr>
            {Array.from({ length: 40 }, (_, i) => {
              const filled = i < lastD.length;
              const full = i < lastB.length;
              return (
                <tr key={i}>
                  <RowHead>{268 + i}</RowHead>
                  <Cell $kind={filled ? 'data' : 'empty'}>{filled ? 267 + i : ''}</Cell>
                  <Cell $kind={full ? 'data' : 'empty'}>{full ? lastB[i] : ''}</Cell>
                  <Cell $kind={full ? 'data' : 'empty'}>{full ? 1000 : ''}</Cell>
                  <Cell $kind={filled ? 'data' : 'empty'}>{filled ? lastD[i] : ''}</Cell>
                </tr>
              );
            })}
          </tbody>
        </SheetTable>
      </SheetArea>
      <VScroll>
        <ScrollButton aria-label="Scroll up"><Chevron d="M1 6l3-3 3 3" /></ScrollButton>
        <Track><Thumb /></Track>
        <ScrollButton aria-label="Scroll down"><Chevron d="M1 2l3 3 3-3" /></ScrollButton>
      </VScroll>
    </BookBody>
    <SheetFooter>
      <SheetNav aria-label="Next sheet"><svg width="10" height="6" viewBox="0 0 10 6"><path d="M0 0l4 3-4 3z" fill="#555" /></svg></SheetNav>
      <SheetTab>
        <svg width="5" height="15" viewBox="0 0 5 15"><path d="M1 0l4 15" stroke="#444" /></svg>
        Sheet1
        <svg width="5" height="15" viewBox="0 0 5 15"><path d="M5 0v15H1z" fill="#c8c8c8" /><path d="M5 0L1 15" stroke="#444" /></svg>
      </SheetTab>
      <TabSpace />
      <HScroll>
        <ScrollButton aria-label="Scroll left"><Chevron d="M6 1L3 4l3 3" /></ScrollButton>
        <HThumb />
        <ScrollButton aria-label="Scroll right"><Chevron d="M2 1l3 3-3 3" /></ScrollButton>
      </HScroll>
      <Corner />
    </SheetFooter>
  </BookWindow>
);

/* ---------- graph window ---------- */

const GraphWindow = styled.section`
  position: absolute;
  left: 465px;
  top: 189px;
  width: 1087px;
  height: 555px;
  display: flex;
  flex-direction: column;
  padding: 0 5px 6px 4px;
  border: 2px solid #8c1c80;
  background: #c6d4ea;
`;

const GraphTitle = styled(WindowTitle)`
  margin: 0 -5px 0 -4px;
  padding-right: 5px;
`;

const Chart = styled.svg`
  display: block;
  flex: 1;
  min-height: 0;
  width: 100%;
  background: #fdfdfd;
  font-family: "Liberation Serif", serif;
  font-size: 16px;
`;

type Pt = [number, number];
const X = (e: number) => 621.900 + 2.8847 * e;
const Y = (v: number) => 716 - 0.3497 * v;

/* "episode:v,v,v" runs: each value belongs to the next episode; a run ends where the following one starts */
const parse = (s: string): Pt[] => {
  const runs = s.trim().split(/\s+/).map(run => {
    const [start, list] = run.split(':');
    return { start: Number(start), values: list.split(',').map(Number) };
  });
  return runs.flatMap((run, r) => run.values
    .map((v, i): Pt => [run.start + i, v])
    .filter(([e]) => r === runs.length - 1 || e < runs[r + 1].start));
};

const speed80 = parse(`
 0:0,3,5,6,5,7,6,4 10:5,8,5,7,4 18:10,6,5,7,4,3,22,14,12,6,4,8,5,4,6,10,14,30,18,14,6,5,12,8,6,5,9,15,11,8,7,10,5,9,14,8,6
 53:8,12,50,12,18,15,17,10,16,13,9,6,10,25 67:35,12,20,10,14,12,57,20,75,62,35,18,8,22,18,8,20,12,8,6
 87:82,40,28,115,30,18,55,91,40,45,20,181,120,50,93,50,10,140,74,30,55,46,98,150,90,98,50,516,284,285,305,370,406,230,98,536,10,508,394,605,597,300,703,689,747,694,751,805,770,808,844,864,842,802,878,873,881,886,888,281,885
 148:918,916,916,915,914,908,888,907,909,911,912,911,913,912,916,916,914,914,921,918,916,920,923,920,923,922,924,925,927,928,930,930,922,925,928,924,926,925,927,926,928,930,932,931,933,935,936,935,936,934,936,935,936,936
 202:927,929,931,930,932,934,933,935,934,936,936,934,936,933,935,936,934,936,937,935,936,935,937,936,934,935,933,936,935,937,936
 234:934,931,940,942,941,942,940,942,941,943,941,942,942,943,941,942,940,942,941,939,936,939,934,938,936,940,941,939,941,938
 267:940,941,936,939
`);
const speed100 = parse(`
 0:0,3,4,6,5,8,4,3,5,6,8,10,6,5,8,10,13,12,6,8,6,14,14,8,6,10,16,12,32,10,8,5,8,12,14,20,13,10,14,25,14,8,6,10,8,13,14,12,10,16,25,12,16,14,15,35,47,26,12,10,17,22,25,20,14,10,12,8,14,10,20,12
 72:35,22,10,18,12,14,8,14,22,62,22,45,35,10,12,25,22,28,32,26,15,22,18,22,19,25
 98:108,15,150,212,30,90,130,219,215,165,225,220,28,190,270,270,270,272,280,300,308,341,370,401
 122:55,170,141,127,160,162,193,257,34,236,170,127,310,478,322,184,465,165,171,189,370,115,341,560,603,556,675,708,922,562,653,515,553,501,751,966,966,1000,444,946,460,996,1000,982,990,988,970,989,977,985,990,999
 173:999,818,988,988,980,968,996,990,985,999,534,996,1000,998,990,975,520,310,994,975,999,958,996,975,992,978,982,996,1000,970,995,1000,998,998,992,984,995,1000,1000,999,993,1000,996,1000,996,985,985,985,993,998,995,990,1000
 227:956,520,951,975,1000 235:1000,993,1000 242:1000,687,1000 254:1000,992,979,1000 262:1000,961,985,1000 270:1000
`);
const speed120 = parse(`
 0:0,4,6,4,5,6,5,7,4,6,8,5,7,10,6,8,7,5,8,10,6,8,7,5,14,20,8,12,6,5,8,10,12,15,20,28,18,12,13,14,13,10,12,14,10,8,12,14,8,14,10,10,14
 53:38,20,10,12,10,8,14,12,10,16,10,8,12,10,14,10,12,11,9,12,14,12,16,12,10,14
 79:63,25,20,14,18,8,6,10,15,20,30,73,25,35,68,25,20,65,20
 98:170,155,100,65,8,145,182,155,180,215,108,43,175,98,287,120,298,303,140,50,42,208,398,322,170,105,45,136,384,394,477,444,457,462,558,536,529,557,219,236,573,349,475,608,398,551,594,586,589,608,651
 149:668,667,668,680,660,673,448,522,680,651,675,641,670,663,668,641,670,668,703,722,725,729,765,754,808,751,708,739,738,742,743,737,751
 182:796,751,744,768,770,769,768,768,768,827,865,866,862,886
 196:892,901,894,890,918,908,909,908,910,919,921,921,920,921,923,922,919,923,920,917,913,923,920,924,922,925,922,922,925,921,924,922,920,925,926,928
 232:913,922,927,916,919,930,928,925,929,933,932,931,932,930,934,937,934,936,938,936,937,937,934,932,930,925,931,936,932,928,936,935,928,934,931
`).filter(([e]) => e < 267).concat(lastD.map((v, i): Pt => [267 + i, v]));

const line = (pts: Pt[]) => pts.map(([e, v], i) => `${i ? 'L' : 'M'}${X(e).toFixed(1)} ${Y(v).toFixed(1)}`).join('');

const legend = [
  { label: 'Reward (120km/h, 650m)', color: '#3f74b4' },
  { label: 'Reward (100km/h, 400m)', color: '#d06c70' },
  { label: 'Reward (80km/h, 250m)', color: '#6c6c6c' },
];

const Graph = () => (
  <GraphWindow aria-label="Graph1">
    <GraphTitle $active>
      <TitleText><Glyph name="graphIcon" size={15} />Graph1 *</TitleText>
      <Captions active />
    </GraphTitle>
    <Chart viewBox="471 305 1074 518" preserveAspectRatio="xMinYMin meet" role="img" aria-label="Reward by episode">
      <rect x="472" y="305" width="19" height="18" fill="#c0c0c0" />
      <text x="478" y="320" fontFamily='"Liberation Sans", sans-serif' fontWeight="bold" fontSize="15" fill="#111">1</text>
      <g fill="none" strokeWidth="1" strokeLinejoin="round">
        <path d={line(speed80)} stroke="#4c4c4c" />
        <path d={line(speed100)} stroke="#cc4a50" />
        <path d={line(speed120)} stroke="#2468b0" />
      </g>
      <path d="M593 330V734H1488" fill="none" stroke="#111" strokeWidth="2" />
      <g stroke="#111" strokeWidth="2">
        {[0, 1, 2, 3, 4, 5, 6, 7, 8].map(i => (
          <path key={i} d={`M${i % 2 ? 589 : 585} ${Y(i * 125)}H593`} />
        ))}
        {Array.from({ length: 13 }, (_, i) => (
          <path key={i} d={`M${X(i * 25)} 734v${i % 2 ? 4 : 8}`} />
        ))}
      </g>
      <g fill="#222">
        {[0, 250, 500, 750, 1000].map(v => <text key={v} x="579" y={Y(v) + 5} textAnchor="end">{v}</text>)}
        {[0, 50, 100, 150, 200, 250, 300].map(e => <text key={e} x={X(e)} y="760" textAnchor="middle">{e}</text>)}
        <text x="1040" y="793" fontSize="21" textAnchor="middle">Episode</text>
        <text transform="translate(537 532) rotate(-90)" fontSize="21" textAnchor="middle">Reward</text>
        {legend.map((l, i) => (
          <React.Fragment key={l.label}>
            <path d={`M1284 ${667 + i * 19.500}h35`} stroke={l.color} />
            <text x="1322" y={672 + i * 19.500}>{l.label}</text>
          </React.Fragment>
        ))}
      </g>
      <path d="M1081 354v8M1037 388l8 4M1194 404l14 9" stroke="#999" />
      <circle cx="1081" cy="366" r="5" fill="#e03238" />
      <circle cx="1049" cy="395" r="5" fill="#484848" />
      <circle cx="1190" cy="401" r="5" fill="#1c5cd8" />
      <text x="1080" y="350" textAnchor="middle" fill="#c83c40">(159,1000)</text>
      <text x="1007" y="384" textAnchor="middle" fill="#222">(148,918)</text>
      <text x="1208" y="427" textAnchor="middle" fill="#2878a0">(197,901)</text>
    </Chart>
  </GraphWindow>
);

const Pointer = styled.svg`
  position: absolute;
  left: 612px;
  top: 97px;
`;

/* ---------- right side ---------- */

const SideTools = styled.aside`
  display: flex;
  flex: none;
  flex-direction: column;
  align-items: center;
  width: 25px;
  background: #e9edfb;
`;

const Dock = styled.aside`
  display: flex;
  flex: none;
  flex-direction: column;
  width: 42px;
  padding-left: 3px;
  overflow: hidden;
  background: #f0f0f0;
`;

const DockTitle = styled.h2`
  flex: none;
  height: 21px;
  margin: 0;
  padding-left: 2px;
  background: linear-gradient(#ccd8e6, #bccce0);
  color: #333;
  font-size: 11px;
  font-weight: normal;
  line-height: 20px;
  white-space: nowrap;
  overflow: hidden;
`;

const Tree = styled.ul`
  flex: none;
  height: 171px;
  margin: 0 0 3px;
  padding: 0;
  list-style: none;
  background: #fff;
  border: 1px solid #8c9cac;
  border-width: 1px 0 1px 1px;
  overflow: hidden;
`;

const TreeRow = styled.li<{ $depth: number; $on?: boolean }>`
  display: flex;
  align-items: center;
  gap: 2px;
  height: 19px;
  padding-left: ${p => 2 + p.$depth * 13}px;
  background: ${p => (p.$on ? '#0c78d4' : 'none')};
  color: #fff;
  font-weight: bold;
`;

const Tick = styled.input`
  appearance: none;
  flex: none;
  width: 13px;
  height: 13px;
  margin: 0;
  border: 1px solid #666;
  background: #fff;
  &:checked::before {
    content: "";
    display: block;
    width: 4px;
    height: 8px;
    margin-left: 4px;
    border: solid #333;
    border-width: 0 1px 1px 0;
    transform: rotate(45deg);
  }
`;

const Toggle = styled.button`
  flex: none;
  display: flex;
  align-items: center;
  justify-content: center;
  width: 11px;
  height: 11px;
  padding: 0;
  border: 1px solid #999;
  background: #fff;
`;

const Minus = () => (
  <Toggle aria-label="Collapse"><svg width="7" height="7" viewBox="0 0 7 7"><path d="M0 3.500h7" stroke="#333" /></svg></Toggle>
);

const AppsBody = styled.div`
  display: flex;
  flex: 1;
  min-height: 0;
`;

const AppsTabs = styled.div`
  display: flex;
  flex: none;
  flex-direction: column;
  align-items: center;
  width: 21px;
  padding-top: 2px;
`;

const TabArrow = styled.button`
  display: flex;
  align-items: center;
  justify-content: center;
  width: 20px;
  height: 13px;
  padding: 0;
  border: 0;
  background: none;
`;

const AppsTab = styled.button<{ $on?: boolean }>`
  padding: 4px 0;
  border: 0;
  background: none;
  color: #222;
  font-size: ${p => (p.$on ? 12 : 11)}px;
  font-weight: ${p => (p.$on ? 'bold' : 'normal')};
  line-height: 16px;
  writing-mode: vertical-rl;
  text-orientation: sideways;
`;

const AppsList = styled.div`
  display: grid;
  flex: 1;
  grid-template-rows: 49px 70px 87px 55px 86px 71px 141px 1fr;
  justify-items: end;
  align-items: end;
  min-width: 0;
  overflow: hidden;
  background: #fff;
  border-left: 1px solid #d4d4d4;
  border-bottom: 1px solid #aaa;
`;

const AppName = styled.span<{ $dim?: boolean }>`
  color: ${p => (p.$dim ? '#888' : '#333')};
  font-size: 12px;
  line-height: 16px;
`;

const StatusBar = styled.footer`
  display: flex;
  flex: none;
  align-items: center;
  justify-content: space-between;
  height: 19px;
  padding-top: 3px;
  background: #eee;
  font-family: Roboto, "Noto Sans CJK SC", sans-serif;
  font-size: 11px;
  line-height: 16px;
  white-space: nowrap;
  span + span { white-space: pre; }
`;

const Taskbar = styled.div`
  display: flex;
  flex: none;
  height: 25px;
  padding-left: 6px;
  background: linear-gradient(90deg, #d4dae2, #d2dfe8 25%, #d6e0e8 50%, #d0dce6 85%, #ced6e0);
`;

const TaskButton = styled.button`
  display: flex;
  align-items: center;
  justify-content: center;
  width: 34px;
  padding: 0 2px 0 0;
  border: 0;
  background: #e8eef4;
`;

const menus = ['查看(V)', '图(G)', '格式(O)', '插入 (I)', '数据(D)', '分析(A)', '快捷分析(S)', '工具(T)', '设置(R)', '连接(N)', '窗口(W)', '社交(I)', '帮助(H)'];

export default function App() {
  return (
    <Page>
      <Global />
      <TitleBar>
        <span>{'d-fit.opju * - D:\\同步\\同济大学 博士\\论文\\Promet\\Origin_Pic\\ - /Folder1/ - OriginPro 2021'}</span>
        <svg width="12" height="4" viewBox="0 0 12 4" aria-hidden="true"><path d="M0 1.500h10" stroke="#999" /></svg>
      </TitleBar>
      <MenuBar>{menus.map(m => <MenuItem key={m}>{m}</MenuItem>)}</MenuBar>

      <ToolRow $start={-12}>
        <ToolGroup>
          <Tools items="gridYellow curve v report graphNew pageRed | open openAlt save saveAll | runner |" />
          <Combo label="Zoom" value="100%" width={56} white inset={2} />
          <Tools active="findPlot" items="| printer present pinkBox film | edit panes cascade | tree | findYellow findPlot sheet sheetEdit gear | addCol >" />
        </ToolGroup>
        <ToolGroup><Tools items=": sumCol sumRow sortAZ | yRed | bars1 bars2 bars3 | funnel funnelX funnelGo >" /></ToolGroup>
        <ToolGroup><Tools items=": plusWave xTxt yTxt zTxt dotV nameTag | toStart left right toEnd >" /></ToolGroup>
        <ToolGroup><Tools items=": rights downs | arrowBig arrowSm | arrowFill arrowEnd >" /></ToolGroup>
      </ToolRow>

      <ToolRow $start={-3}>
        <ToolGroup><Tools items="stack | greenIn globe copies >" /></ToolGroup>
        <ToolGroup><Tools items=": cut copy paste >" /></ToolGroup>
        <ToolGroup>
          <Grip />
          <Combo label="Font" value="默认: 宋体" width={121} inset={19} icon={<TitleText><Gap $size={2} /><Glyph name="tt" size={13} /></TitleText>} />
          <Gap $size={3} />
          <Combo label="Font size" value="0" width={57} />
          <ToolButton>B</ToolButton>
          <ToolButton $italic>I</ToolButton>
          <ToolButton><u>U</u></ToolButton>
          <ToolButton>x<sup>2</sup></ToolButton>
          <ToolButton>x<sub>2</sub></ToolButton>
          <ToolButton>x<sup>2</sup></ToolButton>
          <ToolButton>αβ</ToolButton>
          <ToolButton>A<sup>▴</sup></ToolButton>
          <ToolButton>ᴀ<sup>▾</sup></ToolButton>
          <Tools items="alignL v vlines v fontColor V >" />
        </ToolGroup>
        <ToolGroup>
          <Tools items=": | bucket V palette V pen V sun" />
          <Combo label="Line style" value="实线" width={57} inset={20}
            icon={<svg width="18" height="4" viewBox="0 0 18 4"><path d="M2 2h16" stroke="#333" strokeWidth="2" /></svg>} />
          <Gap $size={2} />
          <Combo label="Line width" value="0" width={57} />
          <Tools items="| swatch V |" />
          <Combo label="Pattern" value="0" width={56} />
          <Tools items="hatch V border v cells >" />
        </ToolGroup>
        <ToolGroup><Tools items=": frameIn gridIn >" /></ToolGroup>
        <ToolGroup><Tools items=": mMark xMark | pinkDots pinkCut | lock >" /></ToolGroup>
      </ToolRow>

      <Body>
        <MainColumn>
          <Workspace>
            <Workbook />
            <Graph />
            <Pointer width="13" height="20" viewBox="0 0 13 20">
              <path d="M1 1v15l4-3 2 6 3-1-3-6h5z" fill="#fff" stroke="#222" />
            </Pointer>
          </Workspace>
          <ToolRow $start={3}>
            <ToolGroup><Tools items="v scatter v redBars v multi v redGrid v area v polar v steps v template >" /></ToolGroup>
            <ToolGroup><Tools items=": cube v | surface v wire v contour v contourEdge v rgbMap >" /></ToolGroup>
            <ToolGroup><Tools items=": maskW maskX | maskG dotsGray dotsRed | dotsBlack >" /></ToolGroup>
            <ToolGroup>
              <Tools items=": rotL rotR tiltL tiltR trapUp trapDown persp cubeRed expand shrink cubeBlue" />
              <Combo label="Angle" value="10" width={57} />
              <Gap $size={3} />
              <More />
            </ToolGroup>
          </ToolRow>
        </MainColumn>
        <SideTools>
          <ToolGroup $vertical>
            <Tools vertical active="runPlot" items=": layers axesRed axesX axesY swapXY runPlot | panel1 panel4 panel3 panelColor | axLB axT axR axBox axIn axInRed >" />
          </ToolGroup>
          <ToolGroup $vertical>
            <Tools vertical items=": al1 al2 | al3 al4 | al5 al6 | al7 al8 | al9 al10 front back | sq1 sq2 | grp1 grp2 >" />
          </ToolGroup>
        </SideTools>
        <Dock>
          <DockTitle>对象管理</DockTitle>
          <Tree>
            <TreeRow $depth={0} $on><Minus /><Glyph name="folder" size={14} />G</TreeRow>
            <TreeRow $depth={1}><Minus /><Tick type="checkbox" defaultChecked aria-label="Layer" /></TreeRow>
            <TreeRow $depth={2}><Minus /></TreeRow>
          </Tree>
          <DockTitle>Apps</DockTitle>
          <AppsBody>
            <AppsTabs>
              {['M0 0h8v1H0zM4 2l4 4H0z', 'M4 1l4 4H0z', 'M0 1h8L4 5z', 'M0 0h8L4 4zM0 5h8v1H0z'].map(d => (
                <TabArrow key={d} aria-label="Scroll tabs"><svg width="8" height="6" viewBox="0 0 8 6"><path d={d} fill="#222" /></svg></TabArrow>
              ))}
              <AppsTab $on>所有</AppsTab>
              <svg width="18" height="5" viewBox="0 0 18 5"><path d="M0 5L18 0" stroke="#aaa" /></svg>
              <AppsTab>连接器</AppsTab>
              <svg width="18" height="8" viewBox="0 0 18 8"><path d="M0 0l18 8" stroke="#aaa" /></svg>
            </AppsTabs>
            <AppsList>
              <AppName>添</AppName>
              <AppName>Si</AppName>
              <AppName>A</AppName>
              <AppName $dim>Se</AppName>
              <AppName>G</AppName>
              <AppName>Gr</AppName>
              <AppName>F</AppName>
            </AppsList>
          </AppsBody>
        </Dock>
      </Body>

      <StatusBar>
        <span>单 (F1)</span>
        <span>{'--   AU : 开 Light Grids 3:[Book1]Sheet1!Col("Reward (120km/h, 650m)")[1:29'}</span>
      </StatusBar>
      <Taskbar>
        <TaskButton aria-label="Origin">
          <svg width="15" height="14" viewBox="0 0 15 14">
            <path d="M3 1h11v10" fill="none" stroke="#9fb4cc" />
            <circle cx="7" cy="7" r="6" fill="#e8a898" />
            <path d="M2 9c1-6 9-6 9-1M5 11c0-4 4-4 4-1" fill="none" stroke="#c85040" strokeWidth="2" />
          </svg>
        </TaskButton>
      </Taskbar>
    </Page>
  );
}
